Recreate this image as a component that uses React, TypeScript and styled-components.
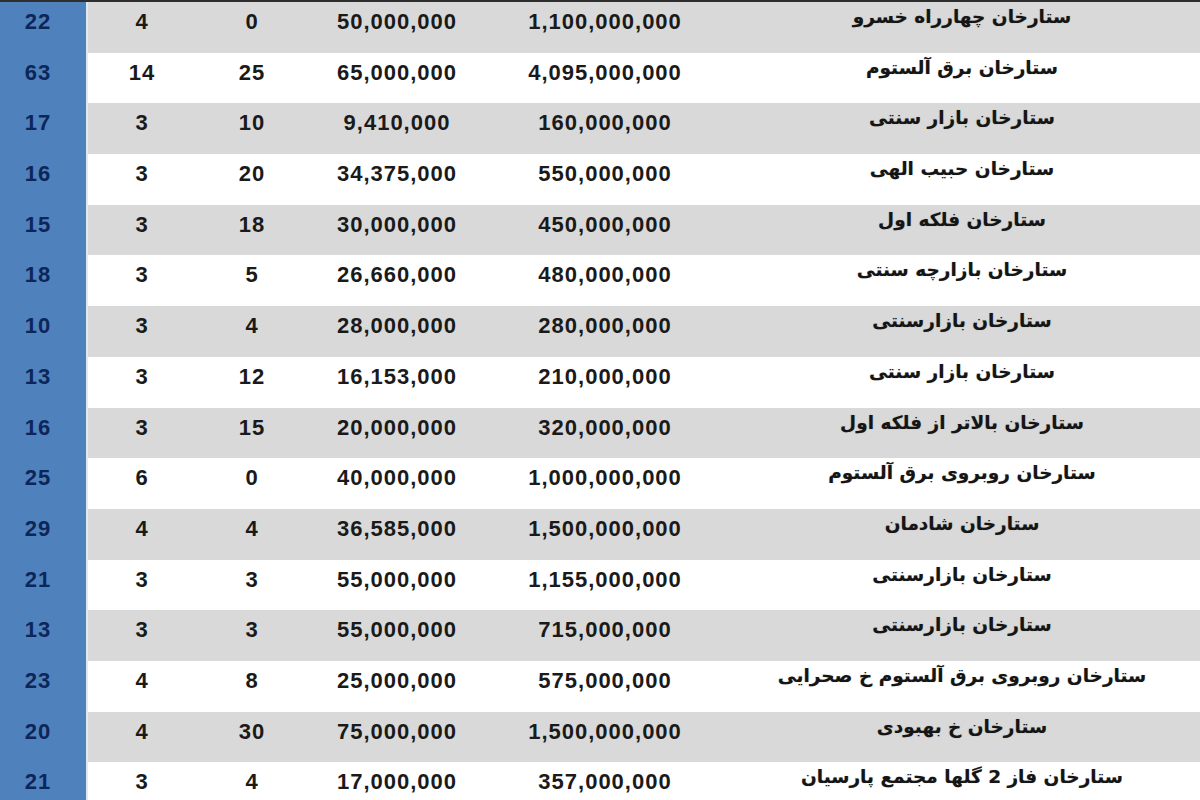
import React from "react";
import styled, { createGlobalStyle } from "styled-components";

const Global = createGlobalStyle`
  html, body { margin: 0; padding: 0; background: #ffffff; overflow: hidden; }
  body { width: 1200px; height: 800px; }
`;

const Table = styled.div`
  width: 1200px;
  height: 800px;
  overflow: hidden;
  border-top: 2px solid #2e2e2e;
  box-sizing: border-box;
  display: flex;
  flex-direction: column;
`;

const Row = styled.div<{ $shade: boolean }>`
  flex: 0 0 50.7px;
  display: grid;
  grid-template-columns: 86px 2px 108px 112px 178px 238px 1fr;
  background: ${(p) => (p.$shade ? "#d9d9d9" : "#ffffff")};
`;

const IndexCell = styled.div`
  background: #4f81bd;
  color: #0d2659;
  font-family: "Liberation Sans", Arial, sans-serif;
  font-weight: 700;
  font-size: 22px;
  letter-spacing: 1px;
  display: flex;
  justify-content: center;
  padding: 7px 10px 0 0;
  box-sizing: border-box;
`;

const Strip = styled.div`
  background: #dfe8f3;
`;

const NumCell = styled.div`
  color: #1a1a1a;
  font-family: "Liberation Sans", Arial, sans-serif;
  font-weight: 700;
  font-size: 22px;
  letter-spacing: 1px;
  display: flex;
  justify-content: center;
  padding-top: 7px;
  box-sizing: border-box;
`;

const NameCell = styled.div`
  color: #151515;
  font-family: "DejaVu Sans", sans-serif;
  font-weight: 700;
  font-size: 18.5px;
  display: flex;
  justify-content: center;
  padding-top: 4px;
  box-sizing: border-box;
  text-shadow: 0 0 1px rgba(0, 0, 0, 0.35);
`;

type Item = [string, string, string, string, string, string];

const rows: Item[] = [
  ["22", "4", "0", "50,000,000", "1,100,000,000", "ستارخان چهارراه خسرو"],
  ["63", "14", "25", "65,000,000", "4,095,000,000", "ستارخان برق آلستوم"],
  ["17", "3", "10", "9,410,000", "160,000,000", "ستارخان بازار سنتی"],
  ["16", "3", "20", "34,375,000", "550,000,000", "ستارخان حبیب الهی"],
  ["15", "3", "18", "30,000,000", "450,000,000", "ستارخان فلکه اول"],
  ["18", "3", "5", "26,660,000", "480,000,000", "ستارخان بازارچه سنتی"],
  ["10", "3", "4", "28,000,000", "280,000,000", "ستارخان بازارسنتی"],
  ["13", "3", "12", "16,153,000", "210,000,000", "ستارخان بازار سنتی"],
  ["16", "3", "15", "20,000,000", "320,000,000", "ستارخان بالاتر از فلکه اول"],
  ["25", "6", "0", "40,000,000", "1,000,000,000", "ستارخان روبروی برق آلستوم"],
  ["29", "4", "4", "36,585,000", "1,500,000,000", "ستارخان شادمان"],
  ["21", "3", "3", "55,000,000", "1,155,000,000", "ستارخان بازارسنتی"],
  ["13", "3", "3", "55,000,000", "715,000,000", "ستارخان بازارسنتی"],
  ["23", "4", "8", "25,000,000", "575,000,000", "ستارخان روبروی برق آلستوم خ صحرایی"],
  ["20", "4", "30", "75,000,000", "1,500,000,000", "ستارخان خ بهبودی"],
  ["21", "3", "4", "17,000,000", "357,000,000", "ستارخان فاز 2 گلها مجتمع پارسیان"],
];

export default function App() {
  return (
    <>
      <Global />
      <Table>
        {rows.map((r, i) => (
          <Row key={i} $shade={i % 2 === 0}>
            <IndexCell>{r[0]}</IndexCell>
            <Strip />
            <NumCell>{r[1]}</NumCell>
            <NumCell>{r[2]}</NumCell>
            <NumCell>{r[3]}</NumCell>
            <NumCell>{r[4]}</NumCell>
            <NameCell dir="rtl">{r[5]}</NameCell>
          </Row>
        ))}
      </Table>
    </>
  );
}
